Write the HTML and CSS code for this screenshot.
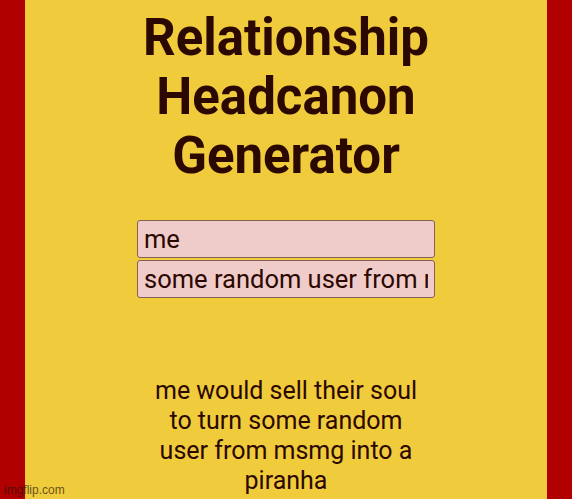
FILE: index.html
```html
<!DOCTYPE html>
<html lang="en">
<head>
    <meta charset="UTF-8">
    <meta name="viewport" content="width=device-width, initial-scale=1.0">
    <title>Relationship Headcanon Generator</title>
    <link rel="stylesheet" href="styles.css">
</head>
<body>
    <div class="wrap">
        <div class="side"></div>
        <main class="page">
            <h1 class="title">Relationship Headcanon Generator</h1>
            <div class="names">
                <input class="name" type="text" value="me">
                <input class="name" type="text" value="some random user from msmg">
            </div>
            <p class="result">me would sell their soul to turn some random user from msmg into a piranha</p>
        </main>
        <div class="side"></div>
    </div>
    <span class="mark">imgflip.com</span>
</body>
</html>
```

FILE: styles.css
```css
*{margin:0;padding:0;box-sizing:border-box;}
html,body{height:100%;}
body{font-family:Roboto,"Liberation Sans",sans-serif;color:#2b0800;background:#b00000;overflow:hidden;}
.wrap{display:flex;height:100%;}
.side{width:25px;flex-shrink:0;background:#b00000;}
.page{flex-grow:1;display:flex;flex-direction:column;align-items:center;background:#f0cb3c;padding-top:8px;}
.title{width:310px;font-size:51px;line-height:59px;font-weight:700;text-align:center;}
.names{display:flex;flex-direction:column;gap:2px;margin-top:35px;}
.name{width:298px;height:38px;padding:0 6px;font-family:inherit;font-size:25.5px;color:#2b0800;background:#efcbca;border:1px solid #866055;border-radius:3px;outline:none;}
.result{width:282px;margin-top:78px;font-size:25px;line-height:30px;text-align:center;}
.mark{position:absolute;left:4px;bottom:2px;font-family:"Liberation Sans",sans-serif;font-size:12px;color:rgba(40,20,10,.7);}
```
